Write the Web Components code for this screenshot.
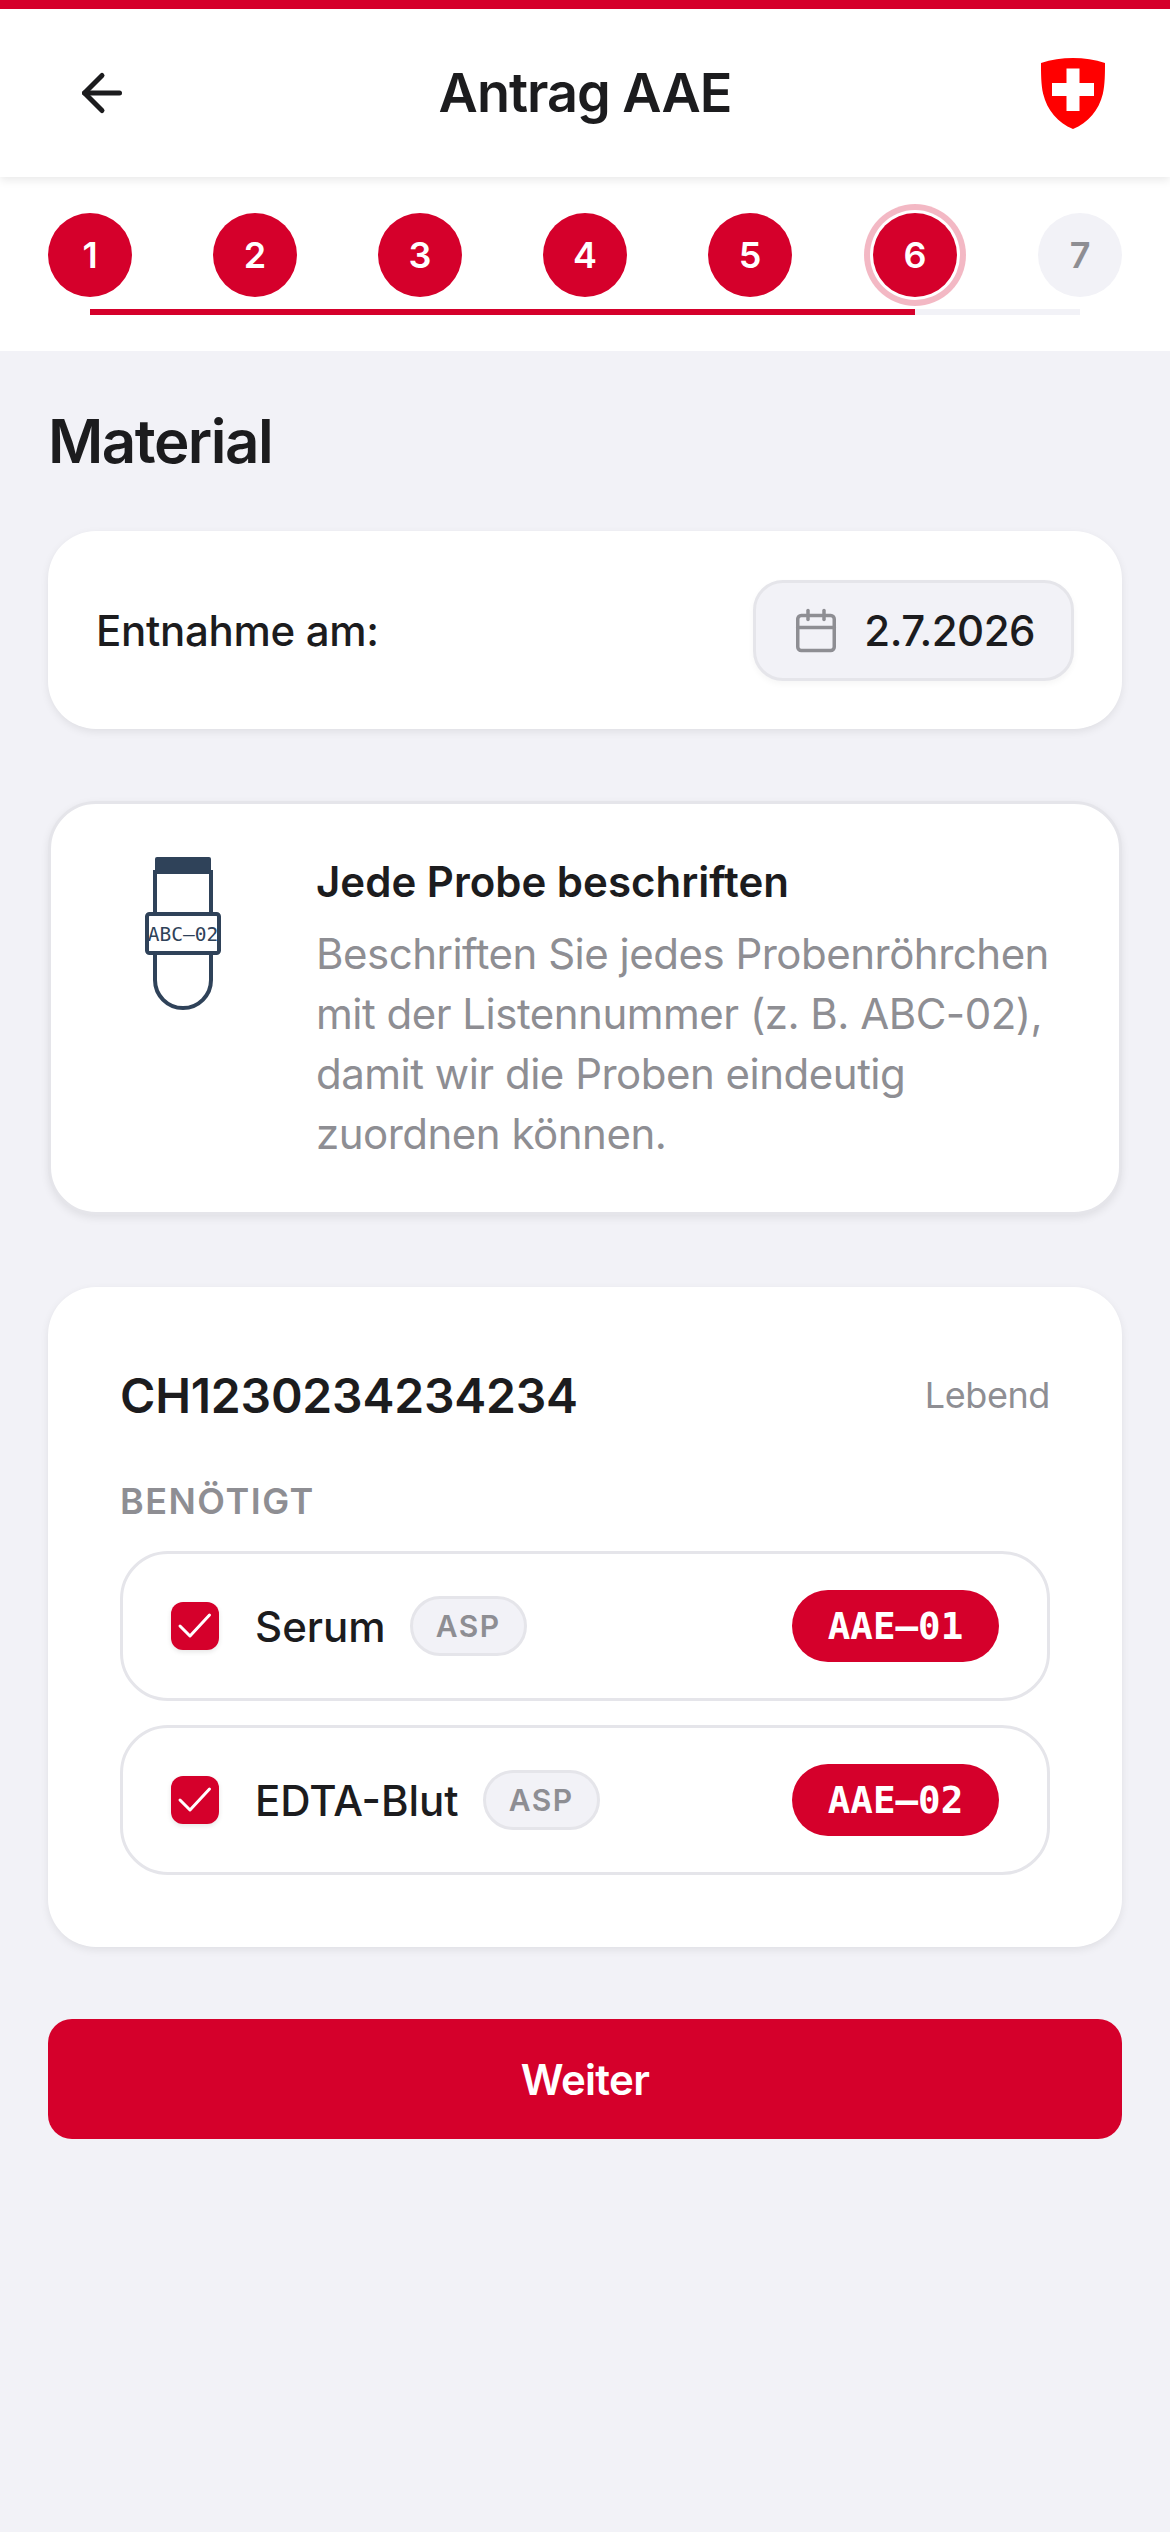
<!DOCTYPE html>
<html lang="de">
<head>
<meta charset="utf-8">
<title>Antrag AAE</title>
<style>
  html, body { margin: 0; padding: 0; }
  body {
    background: #f2f2f7;
    color: #1c1c1e;
    font-family: Inter, "Noto Sans", sans-serif;
    min-height: 2532px;
  }
</style>
</head>
<body>
<app-header>Antrag AAE</app-header>
<step-bar total="7" current="6"></step-bar>
<page-body>
  <section-title>Material</section-title>
  <date-card label="Entnahme am:" date="2.7.2026"></date-card>
  <info-card heading="Jede Probe beschriften">Beschriften Sie jedes Probenröhrchen mit der Listennummer (z. B. ABC-02), damit wir die Proben eindeutig zuordnen können.</info-card>
  <animal-card animal-id="CH1230234234234" status="Lebend" caption="BENÖTIGT">
    <sample-row name="Serum" tag="ASP" code="AAE–01"></sample-row>
    <sample-row name="EDTA-Blut" tag="ASP" code="AAE–02"></sample-row>
  </animal-card>
  <primary-button>Weiter</primary-button>
</page-body>

<script>
class AppHeader extends HTMLElement {
  constructor() {
    super();
    this.attachShadow({ mode: "open" });
    this.shadowRoot.innerHTML = `
      <style>
        :host {
          display: flex;
          align-items: center;
          justify-content: space-between;
          position: relative;
          z-index: 2;
          box-sizing: border-box;
          height: 177px;
          padding: 0 66px;
          background: #fff;
          border-top: 9px solid #d5002b;
          box-shadow: 0 3px 9px rgba(0, 0, 0, 0.09);
        }
        .side { width: 72px; height: 72px; display: flex; align-items: center; justify-content: center; }
        .shield { justify-content: flex-end; }
        .shield svg { margin-right: -1px; }
        h1 { margin: 0; font-size: 54px; font-weight: 600; letter-spacing: -1px; line-height: 72px; color: #1c1c1e; }
        svg { display: block; }
      </style>
      <div class="side">
        <svg width="60" height="60" viewBox="0 0 24 24" fill="none" stroke="#1c1c1e" stroke-width="2" stroke-linecap="round" stroke-linejoin="round">
          <path d="M19 12H5"/><path d="M12 19l-7-7 7-7"/>
        </svg>
      </div>
      <h1><slot></slot></h1>
      <div class="side shield">
        <svg width="64" height="71" viewBox="0 0 64 71">
          <path fill="#f00" d="M0 5C10 1.600 21 0 32 0s22 1.600 32 5c0 10 0 22-2.200 31C58 52 47 65 32 71 17 65 6 52 2.200 36 0 27 0 15 0 5z"/>
          <path fill="#fff" d="M25.500 10.500h13v14.500H53v13H38.500v15h-13v-15H11v-13h14.500z"/>
        </svg>
      </div>
    `;
  }
}

class StepBar extends HTMLElement {
  constructor() {
    super();
    this.attachShadow({ mode: "open" });
  }
  connectedCallback() {
    const total = Number(this.getAttribute("total"));
    const current = Number(this.getAttribute("current"));
    let dots = "";
    for (let i = 1; i <= total; i++) {
      const cls = i === current ? "dot active" : i < current ? "dot" : "dot todo";
      dots += `<div class="${cls}">${i}</div>`;
    }
    const fill = ((current - 1) / (total - 1)) * 100;
    this.shadowRoot.innerHTML = `
      <style>
        :host { display: block; background: #fff; padding: 36px 48px; }
        .dots { display: flex; justify-content: space-between; }
        .dot {
          width: 84px; height: 84px; border-radius: 50%;
          background: #d5002b; color: #fff;
          display: flex; align-items: center; justify-content: center;
          font-size: 36px; font-weight: 600;
        }
        .active { box-shadow: 0 0 0 3px #fff, 0 0 0 9px rgba(213, 0, 43, 0.28); }
        .todo { background: #f2f2f7; color: #8e8e93; }
        .track { margin: 12px 42px 0; height: 6px; background: #f2f2f7; }
        .fill { height: 100%; width: ${fill}%; background: #d5002b; }
      </style>
      <div class="dots">${dots}</div>
      <div class="track"><div class="fill"></div></div>
    `;
  }
}

class PageBody extends HTMLElement {
  constructor() {
    super();
    this.attachShadow({ mode: "open" });
    this.shadowRoot.innerHTML = `
      <style>
        :host { display: flex; flex-direction: column; gap: 72px; padding: 48px 48px 0; }
      </style>
      <slot></slot>
    `;
  }
}

class SectionTitle extends HTMLElement {
  constructor() {
    super();
    this.attachShadow({ mode: "open" });
    this.shadowRoot.innerHTML = `
      <style>
        :host { display: block; margin-bottom: -24px; font-size: 60px; font-weight: 600; letter-spacing: -1.500px; line-height: 84px; color: #1c1c1e; }
      </style>
      <slot></slot>
    `;
  }
}

class DateCard extends HTMLElement {
  constructor() {
    super();
    this.attachShadow({ mode: "open" });
  }
  connectedCallback() {
    this.shadowRoot.innerHTML = `
      <style>
        :host {
          display: flex; align-items: center; justify-content: space-between;
          box-sizing: border-box; height: 198px; padding: 0 48px;
          background: #fff; border-radius: 48px;
          box-shadow: 0 3px 9px rgba(0, 0, 0, 0.08);
        }
        .label { font-size: 42px; font-weight: 500; letter-spacing: -0.300px; color: #1c1c1e; }
        .date {
          display: flex; align-items: center; gap: 24px;
          box-sizing: border-box; height: 101px; padding: 0 36px;
          background: #f2f2f7; border: 3px solid #e5e5ea; border-radius: 30px;
          box-shadow: 0 3px 6px rgba(0, 0, 0, 0.04);
          font-size: 42px; font-weight: 500; letter-spacing: -0.500px; color: #1c1c1e;
        }
        svg { display: block; }
      </style>
      <span class="label">${this.getAttribute("label")}</span>
      <div class="date">
        <svg width="48" height="48" viewBox="0 0 48 48" fill="none" stroke="#8e8e93" stroke-width="3.500" stroke-linecap="round" stroke-linejoin="round">
          <rect x="5.750" y="9.500" width="36.500" height="35" rx="3.500"/>
          <path d="M5.750 21.500h36.500"/>
          <path d="M16 4.500v9"/><path d="M32 4.500v9"/>
        </svg>
        <span>${this.getAttribute("date")}</span>
      </div>
    `;
  }
}

class InfoCard extends HTMLElement {
  constructor() {
    super();
    this.attachShadow({ mode: "open" });
  }
  connectedCallback() {
    this.shadowRoot.innerHTML = `
      <style>
        :host {
          display: flex; gap: 48px;
          box-sizing: border-box; padding: 48px;
          background: #fff; border: 3px solid #e5e5ea; border-radius: 48px;
          box-shadow: 0 3px 9px rgba(0, 0, 0, 0.08);
        }
        .icon { flex: none; width: 169px; }
        svg { display: block; }
        h2 { margin: 0 0 12px; font-size: 42px; font-weight: 600; line-height: 60px; color: #1c1c1e; }
        p { margin: 0; font-size: 42px; letter-spacing: -0.500px; line-height: 60px; color: #8e8e93; }
      </style>
      <div class="icon">
        <svg width="169" height="170" viewBox="0 0 169 170" fill="none">
          <rect x="56" y="5" width="56" height="17" rx="2" fill="#2f4259"/>
          <path stroke="#2f4259" stroke-width="4" d="M56 20h56v108a28 28 0 0 1-56 0z"/>
          <rect x="48" y="62" width="72" height="39" rx="2.500" fill="#fff" stroke="#2f4259" stroke-width="4"/>
          <text x="84" y="88.500" text-anchor="middle" font-family="'DejaVu Sans Mono', monospace" font-size="19.500" fill="#2f4259">ABC–02</text>
        </svg>
      </div>
      <div class="text">
        <h2>${this.getAttribute("heading")}</h2>
        <p><slot></slot></p>
      </div>
    `;
  }
}

class AnimalCard extends HTMLElement {
  constructor() {
    super();
    this.attachShadow({ mode: "open" });
  }
  connectedCallback() {
    this.shadowRoot.innerHTML = `
      <style>
        :host {
          display: block;
          box-sizing: border-box; padding: 72px;
          background: #fff; border-radius: 48px;
          box-shadow: 0 3px 9px rgba(0, 0, 0, 0.08);
        }
        .top { display: flex; align-items: center; justify-content: space-between; height: 72px; }
        .id { font-size: 48px; font-weight: 600; letter-spacing: -0.200px; color: #1c1c1e; }
        .status { font-size: 36px; letter-spacing: -0.400px; color: #8e8e93; }
        .caption { margin: 48px 0 28px; font-size: 36px; line-height: 44px; font-weight: 600; letter-spacing: 1.500px; color: #8e8e93; }
        .rows { display: flex; flex-direction: column; gap: 24px; }
      </style>
      <div class="top">
        <span class="id">${this.getAttribute("animal-id")}</span>
        <span class="status">${this.getAttribute("status")}</span>
      </div>
      <div class="caption">${this.getAttribute("caption")}</div>
      <div class="rows"><slot></slot></div>
    `;
  }
}

class SampleRow extends HTMLElement {
  constructor() {
    super();
    this.attachShadow({ mode: "open" });
  }
  connectedCallback() {
    this.shadowRoot.innerHTML = `
      <style>
        :host {
          display: flex; align-items: center;
          box-sizing: border-box; height: 150px; padding: 0 48px;
          border: 3px solid #e5e5ea; border-radius: 48px;
        }
        .check {
          flex: none; width: 48px; height: 48px; margin-right: 36px;
          border-radius: 12px; background: #d5002b;
          box-shadow: 0 2px 5px rgba(0, 0, 0, 0.1);
        }
        svg { display: block; }
        .name { font-size: 42px; font-weight: 500; color: #1c1c1e; }
        .tag {
          display: flex; align-items: center;
          box-sizing: border-box; height: 60px; margin-left: 24px; padding: 0 23px;
          background: #f2f2f7; border: 3px solid #e5e5ea; border-radius: 30px;
          font-size: 30px; font-weight: 600; letter-spacing: 1.500px; color: #8e8e93;
        }
        .code {
          display: flex; align-items: center; justify-content: center;
          width: 207px; height: 72px; margin-left: auto;
          background: #d5002b; border-radius: 36px; color: #fff;
          font-family: "DejaVu Sans Mono", monospace; font-weight: 700; font-size: 37.500px;
        }
      </style>
      <div class="check">
        <svg width="48" height="48" viewBox="0 0 48 48" fill="none" stroke="#fff" stroke-width="3" stroke-linecap="round" stroke-linejoin="round">
          <path d="M9 24l10 10L38.500 13"/>
        </svg>
      </div>
      <span class="name">${this.getAttribute("name")}</span>
      <span class="tag">${this.getAttribute("tag")}</span>
      <span class="code">${this.getAttribute("code")}</span>
    `;
  }
}

class PrimaryButton extends HTMLElement {
  constructor() {
    super();
    this.attachShadow({ mode: "open" });
    this.shadowRoot.innerHTML = `
      <style>
        :host {
          display: flex; align-items: center; justify-content: center;
          height: 120px; border-radius: 24px;
          background: #d5002b; color: #fff;
          font-size: 42px; font-weight: 600; letter-spacing: -0.700px;
        }
      </style>
      <slot></slot>
    `;
  }
}

customElements.define("app-header", AppHeader);
customElements.define("step-bar", StepBar);
customElements.define("page-body", PageBody);
customElements.define("section-title", SectionTitle);
customElements.define("date-card", DateCard);
customElements.define("info-card", InfoCard);
customElements.define("animal-card", AnimalCard);
customElements.define("sample-row", SampleRow);
customElements.define("primary-button", PrimaryButton);
</script>
</body>
</html>
